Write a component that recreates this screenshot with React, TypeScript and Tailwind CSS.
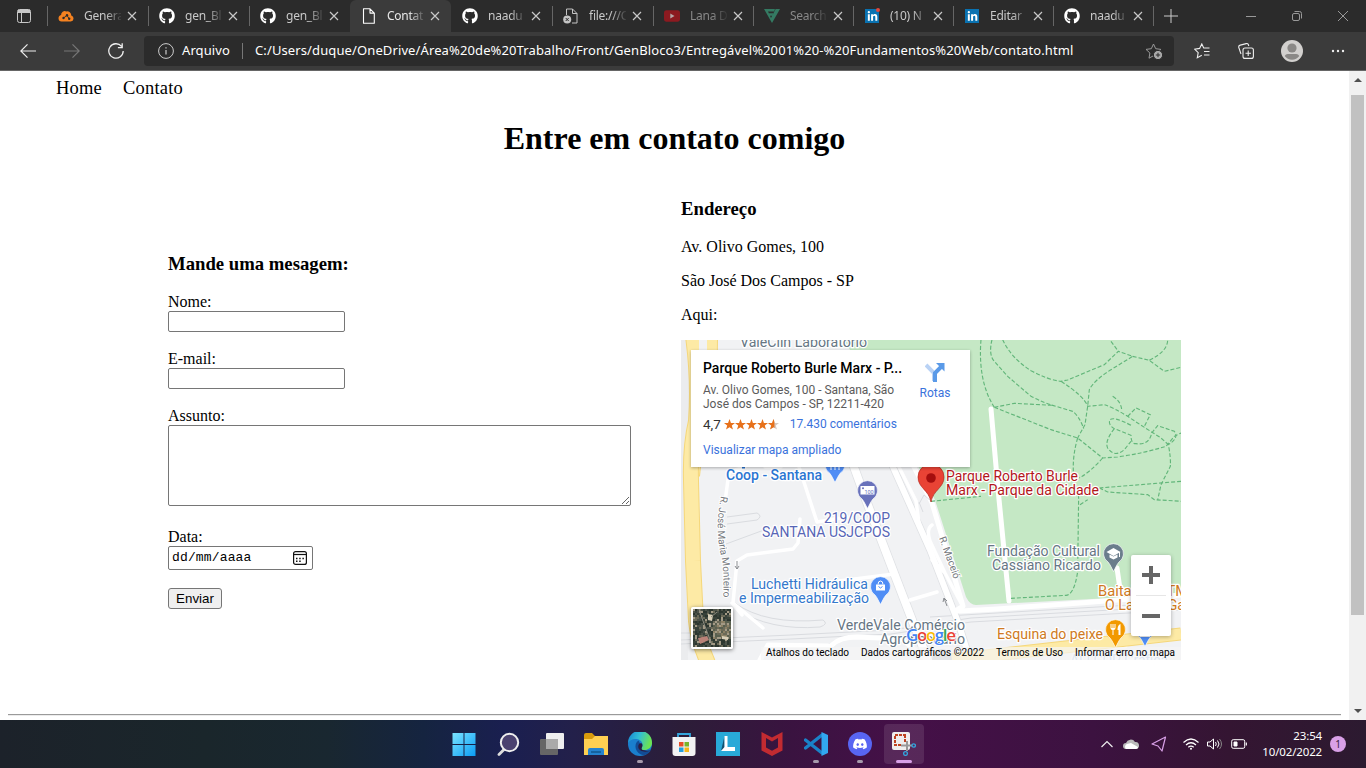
import React from "react";
import { FaGithub, FaLinkedinIn, FaDiscord } from "react-icons/fa";

type IconName = "cloud" | "github" | "doc" | "fileError" | "youtube" | "f" | "linkedin" | "linkedinDot";

function TabIcon({ name }: { name: IconName }) {
  switch (name) {
    case "github":
      return <FaGithub className="h-4 w-4 text-white" />;
    case "linkedin":
    case "linkedinDot":
      return (
        <span className="relative mx-px flex h-[14px] w-[14px] items-center justify-center bg-[#0a72b1]">
          <FaLinkedinIn className="h-[11px] w-[11px] text-white" />
          {name === "linkedinDot" && <span className="absolute -top-px -right-px h-1 w-1 rounded-full bg-[#e0483e]" />}
        </span>
      );
    case "cloud":
      return (
        <svg viewBox="0 0 16 16" className="h-4 w-4">
          <path d="M3.500 13.500a3.300 3.300 0 0 1-.4-6.500 3.700 3.700 0 0 1 5.200-3.600 4.200 4.200 0 0 1 5 4.200 3 3 0 0 1-.6 5.900z" fill="#f58220" />
          <path d="M5.500 10l3.500-2.500 2 3" stroke="#2b2b2b" fill="none" strokeWidth=".9" />
          <g fill="#2b2b2b">
            <circle cx="5.500" cy="10" r="1.200" />
            <circle cx="9" cy="7.300" r="1.200" />
            <circle cx="11.200" cy="10.700" r="1.200" />
          </g>
        </svg>
      );
    case "doc":
      return (
        <svg viewBox="0 0 16 16" className="h-4 w-4" fill="none" stroke="#fff" strokeLinejoin="round" strokeWidth="1.100">
          <path d="M2.500.8h6.500l4.300 4.300v10.100H2.500zM9 .8v4.300h4.300" />
        </svg>
      );
    case "fileError":
      return (
        <svg viewBox="0 0 16 16" className="h-4 w-4" fill="none" stroke="#c4c4c4" strokeLinejoin="round">
          <path d="M3.500 7V1h6l4.500 4.500V15H9M9.500 1v4.500H14" />
          <circle cx="4.200" cy="11.500" r="4" fill="#c4c4c4" stroke="none" />
          <path d="M2.700 10l3 3m0-3l-3 3" stroke="#2b2b2b" />
        </svg>
      );
    case "youtube":
      return (
        <svg viewBox="0 0 16 16" className="h-4 w-4">
          <rect y="2.300" width="16" height="11.400" rx="2.600" fill="#8c1a20" />
          <path d="M6.300 5.500v5l4.200-2.500z" fill="#b4a8a8" />
        </svg>
      );
    case "f":
      return (
        <svg viewBox="0 0 16 16" className="h-4 w-4" fill="#347a62">
          <path d="M0 1h11l-1 2.500H4l.9 1.800h4.300l-1 2.400H6l1 2.200 4.600-8.900H16L8 15z" />
        </svg>
      );
  }
}

const TABS: { icon: IconName; label: string; w: string; dim?: boolean; active?: boolean }[] = [
  { icon: "cloud", label: "Genera", w: "w-[101px]" },
  { icon: "github", label: "gen_Bl", w: "w-[101px]" },
  { icon: "github", label: "gen_Bl", w: "w-[101px]" },
  { icon: "doc", label: "Contat", w: "w-[101px]", active: true },
  { icon: "github", label: "naadu", w: "w-[101px]" },
  { icon: "fileError", label: "file:///C", w: "w-[101px]" },
  { icon: "youtube", label: "Lana D", w: "w-[100px]", dim: true },
  { icon: "f", label: "Search", w: "w-[100px]", dim: true },
  { icon: "linkedinDot", label: "(10) N", w: "w-[100px]" },
  { icon: "linkedin", label: "Editar", w: "w-[100px]" },
  { icon: "github", label: "naadu", w: "w-[100px]" },
];

const Close = () => (
  <svg viewBox="0 0 10 10" className="h-[10px] w-[10px] shrink-0" stroke="#c8c8c8" strokeWidth="1.200">
    <path d="M1 1l8 8M9 1l-8 8" />
  </svg>
);

function TabStrip() {
  return (
    <div className="flex h-8 shrink-0 items-stretch bg-[#2b2b2b]">
      <div className="flex w-[47px] items-center pl-4">
        <svg viewBox="0 0 16 16" className="h-4 w-4" fill="none" stroke="#c8c8c8">
          <rect x="1.500" y="1.500" width="13" height="13" rx="2" />
          <path d="M1.500 4.500h13M5.500 4.500v10" />
          <path d="M2 3h12" strokeWidth="2.500" />
        </svg>
      </div>
      {TABS.map((t, i) => (
        <div key={i} className={t.w + " flex shrink-0 items-center " + (t.active ? "rounded-t-md bg-[#3b3b3b]" : "")}>
          <span className={"h-5 w-px " + (t.active || i === 4 ? "" : "bg-[#666]")} />
          <span className="ml-[10px]"><TabIcon name={t.icon} /></span>
          <span
            className={
              "ml-[10px] w-[37px] text-[12px] tracking-[-0.25px] whitespace-nowrap [mask-image:linear-gradient(to_right,black_60%,transparent_105%)] " +
              (t.dim ? "text-[#888]" : t.active ? "text-[#e8e8e8]" : "text-[#c8c8c8]")
            }
          >
            {t.label}
          </span>
          <span className="ml-[6px]"><Close /></span>
        </div>
      ))}
      <div className="flex flex-1 items-center">
        <span className="h-5 w-px bg-[#666]" />
        <svg viewBox="0 0 14 14" className="ml-[10px] h-[14px] w-[14px]" stroke="#ccc"><path d="M7 0v14M0 7h14" /></svg>
        <span className="ml-[68px] h-px w-[10px] bg-[#999]" />
        <svg viewBox="0 0 10 10" className="ml-[36px] h-[10px] w-[10px]" fill="none" stroke="#999">
          <rect x=".5" y="2.500" width="7" height="7" rx="1.500" />
          <path d="M2.500.5h5a2 2 0 0 1 2 2v5" />
        </svg>
        <svg viewBox="0 0 10 10" className="ml-[36px] h-[10px] w-[10px]" stroke="#999"><path d="M0 0l10 10M10 0L0 10" /></svg>
      </div>
    </div>
  );
}

function Toolbar() {
  return (
    <div className="flex h-[39px] shrink-0 items-center border-b border-[#666] bg-[#3b3b3b] text-white">
      <svg viewBox="0 0 16 16" className="ml-5 h-4 w-4" fill="none" stroke="#eee" strokeWidth="1.200"><path d="M16 8H.8M7.500 1.300L.8 8l6.700 6.700" /></svg>
      <svg viewBox="0 0 16 16" className="ml-7 h-4 w-4" fill="none" stroke="#777" strokeWidth="1.200"><path d="M0 8h15.200M8.500 1.300L15.200 8l-6.700 6.700" /></svg>
      <svg viewBox="0 0 16 16" className="ml-[28px] h-4 w-4" fill="none" stroke="#eee" strokeWidth="1.300"><path d="M13.500 3.300A7.200 7.200 0 1 0 15.200 8M14.200.3v4.300H9.900" /></svg>
      <div className="ml-5 flex h-[30px] w-[1030px] items-center rounded-[4px] bg-[#2b2b2b]">
        <svg viewBox="0 0 16 16" className="ml-[14px] h-4 w-4" fill="none" stroke="#ccc"><circle cx="8" cy="8" r="7.400" /><path d="M8 7v4.500M8 4.200v1.200" strokeWidth="1.200" /></svg>
        <span className="ml-2 w-[50px] text-[13px] tracking-[0.1px] whitespace-nowrap">Arquivo</span>
        <span className="ml-[10px] h-4 w-px bg-[#777]" />
        <span className="ml-3 w-[860px] text-[13px] tracking-[0.115px] whitespace-nowrap">
          C:/Users/duque/OneDrive/Área%20de%20Trabalho/Front/GenBloco3/Entregável%2001%20-%20Fundamentos%20Web/contato.html
        </span>
        <svg viewBox="0 0 18 17" className="ml-[30px] h-[17px] w-[18px]" fill="none" stroke="#999">
          <path d="M8.500 1l2.200 4.700 5.200.7-3.800 3.600.9 5.200-4.500-2.500L4 15.200l.9-5.200L1 6.400l5.300-.7z" />
          <circle cx="13" cy="12" r="4.600" fill="#aaa" stroke="#2b2b2b" />
          <path d="M13 9.800v4.400M10.800 12h4.400" stroke="#2b2b2b" />
        </svg>
      </div>
      <svg viewBox="0 0 16 16" className="ml-5 h-4 w-4" fill="none" stroke="#eee" strokeWidth="1.100">
        <path d="M15.500 5H9.700L7.800.9 5.600 5.400l-5 .7 3.600 3.500-.9 5.100L7.800 12.300M10 8.500h5.500M10 12h5.500" />
      </svg>
      <svg viewBox="0 0 16 16" className="ml-7 h-4 w-4" fill="none" stroke="#eee" strokeWidth="1.100">
        <rect x="5" y="5" width="10.400" height="10.400" rx="2" />
        <path d="M10.200 7.500v5.500M7.500 10.200H13M3 11L.8 4.500a2 2 0 0 1 1.400-2.400l6-1.500a2 2 0 0 1 2.300 1.400l.3 1" />
      </svg>
      <svg viewBox="0 0 22 22" className="ml-[27px] h-[22px] w-[22px]">
        <circle cx="11" cy="11" r="11" fill="#d2d0ce" />
        <circle cx="11" cy="8" r="4.600" fill="#8a8886" />
        <path d="M3.700 16a4 4 0 0 1 3-2h8.600a4 4 0 0 1 3 2 9 9 0 0 1-14.600 0z" fill="#8a8886" />
      </svg>
      <svg viewBox="0 0 14 4" className="ml-7 h-1 w-[14px]" fill="#eee"><circle cx="2" cy="2" r="1.200" /><circle cx="7" cy="2" r="1.200" /><circle cx="12" cy="2" r="1.200" /></svg>
    </div>
  );
}

function Label({ x, y, w, children, fill, anchor = "start", size = 14, weight = 400 }: { x: number; y: number; w: number; children: string; fill: string; anchor?: "start" | "end" | "middle"; size?: number; weight?: number }) {
  return (
    <text x={x} y={y} textLength={w} lengthAdjust="spacingAndGlyphs" fontSize={size} fontWeight={weight} textAnchor={anchor} fill={fill} stroke="#fff" strokeWidth="2.500" strokeLinejoin="round" paintOrder="stroke">
      {children}
    </text>
  );
}

function Pin({ x, y, fill, children }: { x: number; y: number; fill: string; children?: React.ReactNode }) {
  return (
    <g transform={`translate(${x} ${y})`}>
      <path d="M0 18.500C-2 15-3 12-5.500 9A10 10 0 1 1 5.500 9C3 12 2 15 0 18.500z" fill={fill} stroke="#fff" strokeWidth=".7" />
      {children}
    </g>
  );
}

function ParkTrails() {
  return (
    <g transform="translate(931 338) scale(.33333)" fill="none" stroke="#62b67a" strokeWidth="3.400" strokeDasharray="12 6">
      <path d="M150 5Q140 130 190 208M183 5Q172 50 190 70L230 115 300 175Q340 195 365 202L425 220Q445 235 458 272" />
      <path d="M215 5Q240 60 300 98 350 125 390 130L410 126Q460 105 520 80L562 40 605 55 545 92Q490 125 475 155L470 205 462 260 440 300" />
      <path d="M190 208L250 196 365 202M190 208L360 275 440 300 515 360 560 357Q640 345 705 325L730 295 750 285" />
      <path d="M390 130Q460 175 470 205L520 200Q550 210 590 235L620 255 690 300 712 320Q720 360 718 385L690 440 680 486" />
      <path d="M440 300Q425 350 427 400M515 360Q480 400 445 420M540 10L562 40M605 55L655 67 700 100 750 88M655 67Q710 40 710 5M545 175Q570 190 572 215" />
      <path d="M590 235L615 210 658 230 640 265M600 262Q550 235 537 245 530 260 550 272L600 292Q600 318 615 317 655 322 662 285M550 272Q520 310 530 330 550 360 580 335L600 310" />
      <path d="M662 285L680 263 730 280Q745 300 712 320M505 450L750 430M505 450L530 462 650 470 670 485 750 490M443 470L440 700Q430 770 405 772L240 781M0 490L150 475M447 500L470 485" />
    </g>
  );
}

function MapDrawing() {
  return (
    <svg viewBox="681 340 500 320" className="block h-[320px] w-[500px] font-['Roboto',sans-serif]">
      <rect x="681" y="340" width="500" height="320" fill="#f1f2f4" />
      <path d="M681 340h12v60l-8 80 3 180h-7z" fill="#ebecee" />
      <path d="M844 340h337v253l-50 4-155 8q-6 0-10-8l-31-97-30-60z" fill="#c5e8c5" />
      <path d="M681 633h12M681 640l110-5 100-5 80-12 210-12M681 644l110-5 100-5 80-12 210-12M930 617l251-15M727 517l30-4q6 3 0 7l-30 4M726 544l38-14q6-6 6 4M735 603q30 22 88 17 6 4-3 7-50 4-84-18" fill="none" stroke="#dadce0" />
      <g fill="none" stroke="#dfe1e4" strokeLinecap="round">
        <path d="M854 467l12 33 28 73 20 52 14 35" strokeWidth="9.500" />
        <path d="M893 467l25 56 12 27 28 72 12 38" strokeWidth="7.500" />
      </g>
      <g fill="none" stroke="#fff" strokeLinejoin="round" strokeLinecap="round">
        <path d="M854 467l12 33 28 73 20 52 14 35" strokeWidth="8" />
        <path d="M893 467l25 56 12 27 28 72 12 38" strokeWidth="6" />
        <path d="M894 574l-55 7M910 600l27-8M799 467l18 55 30-5M800 519l-2 24-5 6-46 6-10 6-4 42 30 25M745 467l-16 5-4 30M732 603l10 12M765 467h16" strokeWidth="3.500" />
        <path d="M899 467l17 34 3 22M932 525q-6 4-2 16l15 32 18 34M932 560l12 12" strokeWidth="3.500" />
        <path d="M760 660l8-15 60 1M832 645q8-8 25-8l45 2q10 9 25 21" strokeWidth="5" />
        <path d="M914 467l18 36 31 103-8 5q40-1 226-16M991 409l7 80 11 112" strokeWidth="5" />
        <path d="M1117 568l4 28M1100 646h25" strokeWidth="5" />
      </g>
      <path d="M919 504l5-9 7 6M919 502l4 10" fill="none" stroke="#dadce0" />
      <g fill="none">
        <path d="M712 336q0 60-8 90-8 24-10 50" stroke="#f5d77b" strokeWidth="12" />
        <path d="M712 336q0 60-8 90-8 24-10 50" stroke="#fdeaa5" strokeWidth="10" />
        <path d="M693 336q6 45 3 85-6 26-5 60l2 80 3 60q2 20 12 42" stroke="#f5d77b" strokeWidth="16" />
        <path d="M693 336q6 45 3 85-6 26-5 60l2 80 3 60q2 20 12 42" stroke="#fdeaa5" strokeWidth="14" />
        <path d="M950 660l231-26" stroke="#f5d77b" strokeWidth="13" />
        <path d="M950 660l231-26" stroke="#fdeaa5" strokeWidth="11" />
      </g>
      <path d="M703 340v12" stroke="#f1f2f4" strokeWidth="8" />
      <ParkTrails />
      <Label x={740} y={347} w={127} fill="#667684">ValeClin Laboratório</Label>
      <Label x={726} y={480} w={96} fill="#2b76d2" weight={500}>Coop - Santana</Label>
      <path d="M742 467h3" stroke="#2b76d2" strokeWidth="3" />
      <Pin x={835} y={464} fill="#4f8df5"><path d="M-4 3v3M0 3v3M4 3v3" stroke="#fff" /></Pin>
      <Pin x={867.500} y={490} fill="#6972bb">
        <rect x="-7" y="-4" width="14" height="8.500" fill="#fff" />
        <circle cx="-4.500" cy="-1.800" r="1" fill="#6972bb" />
        <text x="-3" y="3.500" fontSize="5.500" textLength="9" fill="#6972bb">100</text>
      </Pin>
      <Label x={890} y={523} w={66} fill="#5866b6" anchor="end">219/COOP</Label>
      <Label x={890} y={537} w={128} fill="#5866b6" anchor="end">SANTANA USJCPOS</Label>
      <Label x={868} y={589} w={117} fill="#3478cc" anchor="end">Luchetti Hidráulica</Label>
      <Label x={869} y={603} w={130} fill="#3478cc" anchor="end">e Impermeabilização</Label>
      <Pin x={880.500} y={586} fill="#4f8df5">
        <path d="M-4.500-1.500h9v6h-9z" fill="#fff" />
        <path d="M-2.500-1.500q0-3.500 2.500-3.500t2.500 3.500" fill="none" stroke="#fff" />
        <path d="M-2 .5q2 3 4 0" fill="none" stroke="#4f8df5" />
      </Pin>
      <Label x={837} y={630} w={128} fill="#667684">VerdeVale Comércio</Label>
      <Label x={965} y={644} w={85} fill="#667684" anchor="end">Agropecuário</Label>
      <Label x={1100} y={556} w={113} fill="#667684" anchor="end">Fundação Cultural</Label>
      <Label x={1101} y={570} w={109} fill="#667684" anchor="end">Cassiano Ricardo</Label>
      <Pin x={1113.500} y={553} fill="#6b7d8c">
        <path d="M-7-1l7-4 7 4-7 4zM-4 1.500v3l4 2 4-2v-3l-4 2z" fill="#fff" /><path d="M6-1v5" stroke="#fff" />
      </Pin>
      <Label x={1098} y={596} w={90} fill="#cf7a22">Baitakão - TM</Label>
      <Label x={1105} y={610} w={80} fill="#cf7a22">O Lanche Ga</Label>
      <Label x={997} y={639} w={106} fill="#cf7a22">Esquina do peixe</Label>
      <Pin x={1115.500} y={629} fill="#f29900">
        <path d="M-5-5v4q0 2 2 2v5h1v-5q2 0 2-2v-4h-1v4h-1v-4h-1v4h-1v-4zM5-5v11H3V1H2q0-5 3-6" fill="#fff" />
      </Pin>
      <Pin x={1145} y={628} fill="#4f8df5"><path d="M-5 5h10v4H-5z" fill="#fff" /></Pin>
      <Label x={1070} y={665} w={98} fill="#a9c4ec">ALLCOP Gráfica</Label>
      <Label x={946} y={481} w={132} fill="#b3171c">Parque Roberto Burle</Label>
      <Label x={946} y={495} w={153} fill="#b3171c">Marx - Parque da Cidade</Label>
      <path d="M931 502c-2-12-13-14-13-25a13 13 0 0 1 26 0c0 11-11 13-13 25z" fill="#e94335" stroke="#b3261e" strokeWidth=".7" />
      <circle cx="931" cy="478" r="4.800" fill="#a50e0e" />
      <path id="monteiro" d="M721 496q-6 30-1 55 5 18 3 48" fill="none" />
      <text fontSize="10" fill="#75797e" stroke="#fff" strokeWidth="2" paintOrder="stroke"><textPath href="#monteiro" textLength="102">R. José Maria Monteiro</textPath></text>
      <text fontSize="10" fill="#75797e" stroke="#fff" strokeWidth="2" paintOrder="stroke" textLength="44" transform="translate(939 538) rotate(70)">R. Maceió</text>
      <path d="M737 561v8m-2-3l2 3 2-3M947 606l-3-8m-1 4l1-4 3 3" stroke="#8a8d91" fill="none" />
      <circle cx="942" cy="659" r="10" fill="#b7bec4" />
      <rect x="761" y="647" width="420" height="13" fill="#f5f5f5" fillOpacity=".7" />
      <text x="906" y="641" fontSize="17" fontWeight="600" textLength="50" stroke="#fff" strokeWidth="1.500" paintOrder="stroke" className="font-['Open_Sans',sans-serif]">
        <tspan fill="#4285f4">G</tspan><tspan fill="#ea4335">o</tspan><tspan fill="#fbbc05">o</tspan><tspan fill="#4285f4">g</tspan><tspan fill="#34a853">l</tspan><tspan fill="#ea4335">e</tspan>
      </text>
      <g fontSize="10" fill="#000">
        <text x="766" y="656" textLength="83">Atalhos do teclado</text>
        <text x="861" y="656" textLength="123">Dados cartográficos ©2022</text>
        <text x="996" y="656" textLength="67">Termos de Uso</text>
        <text x="1075" y="656" textLength="100">Informar erro no mapa</text>
      </g>
    </svg>
  );
}

const TERRAIN = ["#38423a", "#4d534a", "#2c362f", "#6b6a58", "#8b8064", "#59604f", "#3c4a40", "#a39a86"];
const CELLS = Array.from({ length: 361 }, (_, i) => {
  const x = i % 19;
  const y = Math.floor(i / 19);
  const n = (x * 73 + y * 151 + ((x * y * 37) % 91) + ((x * x + y * 3) % 17) * 11) % 29;
  const built = x > 9 && y > 5 && y < 15;
  return { x: x * 2, y: y * 2, fill: built ? TERRAIN[n % 4 === 0 ? 7 : 3 + (n % 3)] : TERRAIN[n % 11 === 0 ? 7 : n % 7 === 0 ? 3 : n % 3] };
});

function Satellite() {
  return (
    <svg viewBox="0 0 38 38" className="h-[38px] w-[38px]">
      {CELLS.map((c) => <rect key={c.x + "-" + c.y} x={c.x} y={c.y} width="2.100" height="2.100" fill={c.fill} />)}
      <path d="M15 5l5 1-1 6-4-1zM29 27l6 1v3l-6-1z" fill="#d8cfb8" />
      <path d="M5 29l9-2 2 4-9 4z" fill="#b98278" />
      <path d="M6 0l4 12 9 24M24 3l-6 5" stroke="#8d8c80" strokeWidth="1" fill="none" />
    </svg>
  );
}

const Star = ({ className }: { className: string }) => (
  <svg viewBox="0 0 22 22" className={className} fill="currentColor"><path d="M11 0l2.900 7.800 8.100.3-6.400 5 2.300 8L11 16.500l-6.900 4.600 2.300-8L0 8.100l8.100-.3z" /></svg>
);

function MapEmbed() {
  return (
    <div className="relative mt-4 h-[320px] w-[500px] overflow-hidden font-['Roboto',sans-serif]">
      <MapDrawing />
      <div className="absolute top-[10px] left-[10px] flex h-[117px] w-[279px] bg-white pt-[10px] pl-3 shadow-[0_1px_3px_rgba(0,0,0,0.3)]">
        <div className="w-[205px] whitespace-nowrap">
          <div className="text-[14px] leading-[17px] font-medium text-black">Parque Roberto Burle Marx - P...</div>
          <div className="mt-[6px] text-[12px] leading-[14px] text-[#5b5b5b]">Av. Olivo Gomes, 100 - Santana, São<br />José dos Campos - SP, 12211-420</div>
          <div className="mt-[5px] flex h-4 items-center">
            <span className="text-[13.500px] text-[#333]">4,7</span>
            <span className="ml-[3px] flex text-[#e7711b]">
              {[0, 1, 2, 3].map((i) => <Star key={i} className="h-[11px] w-[11px]" />)}
              <span className="relative h-[11px] w-[11px]">
                <Star className="absolute h-[11px] w-[11px] text-[#d5c9c2]" />
                <Star className="absolute h-[11px] w-[11px] [clip-path:inset(0_40%_0_0)]" />
              </span>
            </span>
            <span className="ml-[11px] text-[12px] text-[#3a72dc]">17.430 comentários</span>
          </div>
          <div className="mt-[10px] text-[12px] leading-4 text-[#3a72dc]">Visualizar mapa ampliado</div>
        </div>
        <div className="ml-[9px] flex w-[36px] flex-col items-center pt-[2px]">
          <svg viewBox="0 0 20 20" className="h-5 w-5" fill="none">
            <path d="M1 3l8 8v8" stroke="#b9d2f5" strokeWidth="4" />
            <path d="M10 20v-9l6-6" stroke="#5a9ae8" strokeWidth="4" />
            <path d="M11 1h8.500v8.500z" fill="#5a9ae8" />
          </svg>
          <span className="mt-[3px] text-[12px] leading-4 text-[#3a72dc]">Rotas</span>
        </div>
      </div>
      <div className="absolute top-[267px] left-[10px] h-[42px] w-[42px] rounded-[2px] border-2 border-white shadow-[0_1px_4px_rgba(0,0,0,0.5)]"><Satellite /></div>
      <div className="absolute top-[215px] left-[450px] flex h-[81px] w-10 flex-col items-center rounded-[2px] bg-white shadow-[0_1px_4px_rgba(0,0,0,0.3)]">
        <svg viewBox="0 0 18 18" className="mt-[11px] h-[18px] w-[18px]" stroke="#666" strokeWidth="4"><path d="M9 0v18M0 9h18" /></svg>
        <span className="mt-[11px] h-px w-[30px] bg-[#e6e6e6]" />
        <span className="mt-[18px] h-1 w-[18px] bg-[#666]" />
      </div>
    </div>
  );
}

const FIELD = "block rounded-[2px] border border-[#767676] bg-white";

function Page() {
  return (
    <div className="flex min-h-0 flex-1 bg-white font-['Liberation_Serif',serif] text-[16px] leading-[18px] text-black">
      <main className="w-[1349px] px-2">
        <nav className="flex gap-[21px] pt-[7px] pl-12 text-[18.500px] leading-5"><span className="tracking-[0.2px]">Home</span><span className="tracking-[0.2px]">Contato</span></nav>
        <h1 className="mt-[22px] text-center text-[32px] leading-9 font-bold">Entre em contato comigo</h1>
        <div className="flex pt-[42px] pl-40">
          <form className="w-[513px] pt-[55px]">
            <h3 className="mb-[18px] text-[18.720px] leading-[22px] font-bold">Mande uma mesagem:</h3>
            <label className="block">Nome:</label>
            <input className={FIELD + " mb-[18px] h-[21px] w-[177px]"} />
            <label className="block">E-mail:</label>
            <input className={FIELD + " mb-[18px] h-[21px] w-[177px]"} />
            <label className="block">Assunto:</label>
            <textarea className={FIELD + " mb-[22px] h-[81px] w-[463px] resize"} />
            <label className="block">Data:</label>
            <div className={FIELD + " flex! h-6 w-[145px] items-center justify-between pr-[5px] pl-[3px] font-['Liberation_Mono',monospace] text-[13px] tracking-[0.15px]"}>
              <span>dd/mm/aaaa</span>
              <svg viewBox="0 0 14 14" className="h-[14px] w-[14px]" fill="none" stroke="#111" strokeWidth="1.200">
                <rect x=".6" y=".6" width="12.800" height="12.800" rx="2" />
                <path d="M.6 3.500h12.800" />
                <path d="M3 7.500h8M3 10.200h5.500" strokeWidth="1.500" strokeDasharray="1.500 1.700" />
              </svg>
            </div>
            <button type="button" className="mt-[18px] block h-[21px] w-[54px] rounded-[3px] border border-[#767676] bg-[#efefef] font-['Liberation_Sans',sans-serif] text-[13.333px] leading-[19px]">Enviar</button>
          </form>
          <section>
            <h3 className="text-[18.720px] leading-[22px] font-bold">Endereço</h3>
            <p className="mt-[18px]">Av. Olivo Gomes, 100</p>
            <p className="mt-4">São José Dos Campos - SP</p>
            <p className="mt-4">Aqui:</p>
            <MapEmbed />
          </section>
        </div>
        <div className="mt-[54px] h-0.5 border-t border-b border-t-[#9a9a9a] border-b-[#ececec]" />
      </main>
      <div className="flex w-[17px] flex-col items-center bg-[#f1f1f1]">
        <svg viewBox="0 0 8 4" className="mt-[7px] h-1 w-2"><path d="M4 0l4 4H0z" fill="#505050" /></svg>
        <div className="mt-[13px] h-[520px] w-[13px] bg-[#c1c1c1]" />
        <svg viewBox="0 0 8 4" className="mt-auto mb-[7px] h-1 w-2"><path d="M4 4l4-4H0z" fill="#505050" /></svg>
      </div>
    </div>
  );
}

const APPS: { run?: boolean; active?: boolean; icon: React.ReactNode }[] = [
  { icon: <><defs><linearGradient id="win" x2="1" y2="1"><stop stopColor="#7be4ff" /><stop offset="1" stopColor="#0a9cf5" /></linearGradient></defs><path d="M.5 1H11.500v11H.5zM12.500 1h11v11h-11zM.5 13h11v11H.5zM12.500 13h11v11h-11z" fill="url(#win)" /></> },
  { icon: <><path d="M9 16.500l-6 6" stroke="#ddd" strokeWidth="2.800" strokeLinecap="round" /><circle cx="13.500" cy="10.500" r="8.700" fill="#4b4270" stroke="#eee" strokeWidth="2" /></> },
  { icon: <><rect x="6" y="1" width="18" height="16" rx="1" fill="#eee" /><rect y="7" width="18" height="16" rx="1" fill="#666" /><path d="M6 7h12v10H6z" fill="#aaa" /></> },
  { icon: <><path d="M0 3q0-2 2-2h6l3 3h13v8H0z" fill="#d99b0c" /><path d="M0 7h8l3-3h13v19H0z" fill="#ffd052" /><path d="M4 23v-5q0-2 2-2h12q2 0 2 2v5z" fill="#2583cf" /><path d="M7 20h10" stroke="#11578f" strokeWidth="1.500" /></> },
  { run: true, icon: <><defs><linearGradient id="edge" x2="1" y2=".3"><stop stopColor="#1583d1" /><stop offset=".5" stopColor="#31bed6" /><stop offset="1" stopColor="#6be254" /></linearGradient></defs><circle cx="12" cy="12" r="12" fill="#1a7fce" /><path d="M10.500 8.500C5 12 7 22 16 23.300 19 22.500 22 20.500 23 18c-5 2-9 0-9.500-4z" fill="#124c96" /><path d="M0 11a12 12 0 0 1 24-.5c.3 5-4 7.500-8 7.500-3 0-3-1-2-3 2-5-2-8-7-8-3 0-6 2-7 4z" fill="url(#edge)" /><path d="M13.800 11.500c-2-1-4 1-3.500 4 .7 3.500 7 6 12.700 2.500-3 1.200-6.500 1-8.500 0-1.500-1-1-2-.3-3.200.5-1.200.3-2.500-.4-3.300z" fill="#2a1d42" /></> },
  { icon: <><path d="M6 6V2h12v4" stroke="#35a6dc" strokeWidth="1.800" fill="none" /><path d="M.5 5h23v16q0 3-3 3h-17q-3 0-3-3z" fill="#f2f2f2" /><path d="M7 10h4.500v4.500H7z" fill="#e74e27" /><path d="M12.500 10H17v4.500h-4.500z" fill="#78b52a" /><path d="M7 15.500h4.500V20H7z" fill="#249fdd" /><path d="M12.500 15.500H17V20h-4.500z" fill="#f6b719" /></> },
  { icon: <><path d="M0 0h24v24H0z" fill="#28a9d8" /><path d="M8.500 4v12L5 19z" fill="#12506e" /><path d="M8.500 4h3v11H19v4H5l3.500-4z" fill="#fff" /></> },
  { icon: <path d="M1.500 0l10.500 5.500L22.500 0v18.500L12 24 1.500 18.500zM6 6v9.500l6 3.300 6-3.300V6l-6 3.500z" fill="#c22b31" fillRule="evenodd" /> },
  { run: true, icon: <><path d="M1.500 8L18 21M1.500 16L18 3" stroke="#1a82c8" strokeWidth="3.400" fill="none" strokeLinecap="round" /><path d="M17.500 0L24 3v18l-6.500 3z" fill="#32a7ef" /></> },
  { run: true, icon: <><circle cx="12" cy="12" r="12" fill="#5865f2" /><FaDiscord x="4.500" y="4.500" size={15} color="#fff" /></> },
  { active: true, icon: <><rect width="18" height="18" rx="2" fill="#f0eeee" /><path d="M14 3H3v10h7M13 3v7" fill="none" stroke="#bf4321" strokeWidth="2" strokeDasharray="3 1" /><path d="M9 13.500h11M15 9v10" stroke="#999" strokeWidth="2" /><circle cx="21.700" cy="13.500" r="1.700" fill="none" stroke="#32a7df" strokeWidth="1.300" /><circle cx="13.500" cy="21.500" r="1.900" fill="none" stroke="#32a7df" strokeWidth="1.300" /></> },
];

function Taskbar() {
  return (
    <footer className="flex h-12 shrink-0 items-center bg-[linear-gradient(90deg,#1c222a_0%,#1a262b_15%,#192730_24%,#152440_31%,#1a1f50_37%,#23204a_42%,#2c1d38_50%,#3a1340_58%,#451048_66%,#3c1240_80%,#341532_90%,#2c1a30_100%)] text-white">
      <div className="ml-[444px] flex gap-1">
        {APPS.map((a, i) => (
          <div key={i} className={"flex h-10 w-10 flex-col items-center rounded-[4px] pt-2 " + (a.active ? "bg-white/10" : "")}>
            <svg viewBox="0 0 24 24" className="h-6 w-6">{a.icon}</svg>
            {a.run && <span className="mt-1 h-[3px] w-[6px] rounded-full bg-[#a69aab]" />}
            {a.active && <span className="mt-1 h-[3px] w-4 rounded-full bg-[#d9a0e8]" />}
          </div>
        ))}
      </div>
      <svg viewBox="0 0 12 8" className="ml-[177px] h-2 w-3" fill="none" stroke="#eee" strokeWidth="1.200"><path d="M.5 7L6 1.500 11.500 7" /></svg>
      <svg viewBox="0 0 16 10" className="ml-[10px] h-[10px] w-4"><path d="M3 10a3 3 0 0 1 0-6 5 5 0 0 1 9-1 3.500 3.500 0 0 1 1 7z" fill="#bbb" /><path d="M3 10a3 3 0 0 1 1-5l4-1 7 4q0 2-2 2z" fill="#fff" /></svg>
      <svg viewBox="0 0 16 16" className="ml-3 h-4 w-4" fill="none" stroke="#d9a0e8" strokeLinejoin="round" strokeWidth="1.200"><path d="M14.500 1L1 8l6 2 4 5z" /></svg>
      <svg viewBox="0 0 16 12" className="ml-4 h-3 w-4" fill="none" stroke="#fff" strokeWidth="1.200"><path d="M.5 4.500q7.500-7 15 0M3 7q5-4.500 10 0M5.300 9.200q2.700-2.200 5.400 0" /><circle cx="8" cy="10.700" r="1" fill="#fff" stroke="none" /></svg>
      <svg viewBox="0 0 16 12" className="ml-2 h-3 w-4" fill="none" stroke="#fff"><path d="M.5 4v4H3l3.500 3V1L3 4zM8.500 4q1.500 2 0 4M10.500 2.500q3 3.500 0 7" /><path d="M12.500 1q4 5 0 10" stroke="#888" /></svg>
      <svg viewBox="0 0 16 10" className="ml-2 h-[10px] w-4" fill="none" stroke="#fff"><rect x=".7" y=".7" width="13" height="8.600" rx="1.500" /><path d="M3 3h3v4H3z" fill="#fff" /><path d="M15.300 3.500v3" strokeWidth="1.200" /></svg>
      <div className="ml-[15px] w-[60px] text-right text-[11.500px] leading-4 tracking-[-0.15px] whitespace-nowrap"><div>23:54</div><div>10/02/2022</div></div>
      <span className="ml-2 flex h-4 w-4 items-center justify-center rounded-full bg-[#d9a0e8] text-[10px] text-[#3a2040]">1</span>
    </footer>
  );
}

export default function App() {
  return (
    <div className="flex h-[768px] w-[1366px] flex-col overflow-hidden font-['Noto_Sans',sans-serif]">
      <TabStrip />
      <Toolbar />
      <Page />
      <Taskbar />
    </div>
  );
}
